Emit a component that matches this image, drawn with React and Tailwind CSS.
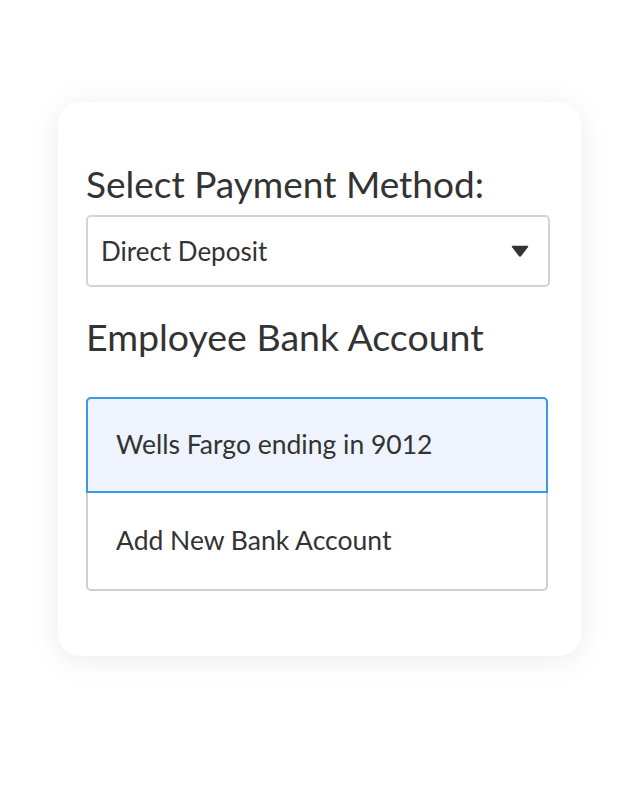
export default function App() {
  return (
    <div
      className="min-h-[801px] w-full bg-white pt-[102px] pl-[58px]"
      style={{ fontFamily: 'Lato, "Noto Sans", sans-serif' }}
    >
      <div className="w-[523px] rounded-[22px] bg-white shadow-[0_4px_30px_rgba(0,0,0,0.08)] pt-[60px] pb-[65px] pl-[28px] pr-[31px] text-[#333333]">
        <h2 className="text-[37px] leading-[44px]">Select Payment Method:</h2>
        <div className="mt-[9px] flex h-[72px] items-center justify-between rounded-[5px] border-2 border-[#d4d4d4] pl-[13px] pr-[19px]">
          <span className="text-[26px]">Direct Deposit</span>
          <svg width="18" height="12" viewBox="0 0 18 12">
            <path d="M1.5 1.5 H16.5 L9.6 10.6 Q9 11.3 8.4 10.6 Z" fill="#333" stroke="#333" strokeLinejoin="round" strokeWidth="1.5" />
          </svg>
        </div>
        <h2 className="mt-[28px] text-[37.5px] leading-[44px]">Employee Bank Account</h2>
        <div className="mt-[38px] mr-[2px] rounded-[5px] border-2 border-[#cfcfcf]">
          <div className="-mx-[2px] -mt-[2px] flex h-[96px] items-center rounded-t-[5px] border-2 border-[#3a9ae0] bg-[#eef3fe] pl-[28px]">
            <span className="text-[26.5px]">Wells Fargo ending in 9012</span>
          </div>
          <div className="flex h-[96px] items-center pl-[28px]">
            <span className="text-[26.5px]">Add New Bank Account</span>
          </div>
        </div>
      </div>
    </div>
  );
}
